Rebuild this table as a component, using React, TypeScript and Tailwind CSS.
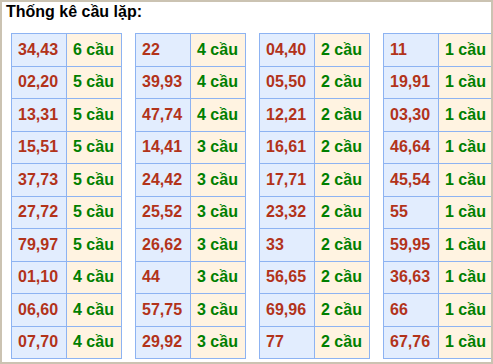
import React from "react";

const tables: [string, number][][] = [
  [
    ["34,43", 6], ["02,20", 5], ["13,31", 5], ["15,51", 5], ["37,73", 5],
    ["27,72", 5], ["79,97", 5], ["01,10", 4], ["06,60", 4], ["07,70", 4],
  ],
  [
    ["22", 4], ["39,93", 4], ["47,74", 4], ["14,41", 3], ["24,42", 3],
    ["25,52", 3], ["26,62", 3], ["44", 3], ["57,75", 3], ["29,92", 3],
  ],
  [
    ["04,40", 2], ["05,50", 2], ["12,21", 2], ["16,61", 2], ["17,71", 2],
    ["23,32", 2], ["33", 2], ["56,65", 2], ["69,96", 2], ["77", 2],
  ],
  [
    ["11", 1], ["19,91", 1], ["03,30", 1], ["46,64", 1], ["45,54", 1],
    ["55", 1], ["59,95", 1], ["36,63", 1], ["66", 1], ["67,76", 1],
  ],
];

const CauTable: React.FC<{ rows: [string, number][] }> = ({ rows }) => (
  <table className="border-collapse table-fixed w-[110px]">
    <tbody>
      {rows.map(([pair, count]) => (
        <tr key={pair} className="h-[32.5px]">
          <td className="w-[55px] border border-[#8db3f2] bg-[#e2edfe] pl-[6px] p-0 text-[16px] font-bold text-[#b2331a]">
            {pair}
          </td>
          <td className="w-[55px] border border-[#8db3f2] bg-[#fff3e1] pl-[6px] p-0 text-[16px] font-bold text-[#007f00]">
            {count} cầu
          </td>
        </tr>
      ))}
    </tbody>
  </table>
);

export default function App() {
  return (
    <div
      className="w-[493px] h-[364px] border-2 border-[#cbc3b2] bg-white pl-[4px] overflow-hidden"
      style={{ fontFamily: '"Liberation Sans", Arial, sans-serif' }}
    >
      <div className="h-[31px] text-[16px] leading-[20px] font-bold text-black">
        Thống kê cầu lặp:
      </div>
      <div className="flex gap-[13px] pl-[5px]">
        {tables.map((rows, i) => (
          <CauTable key={i} rows={rows} />
        ))}
      </div>
    </div>
  );
}
